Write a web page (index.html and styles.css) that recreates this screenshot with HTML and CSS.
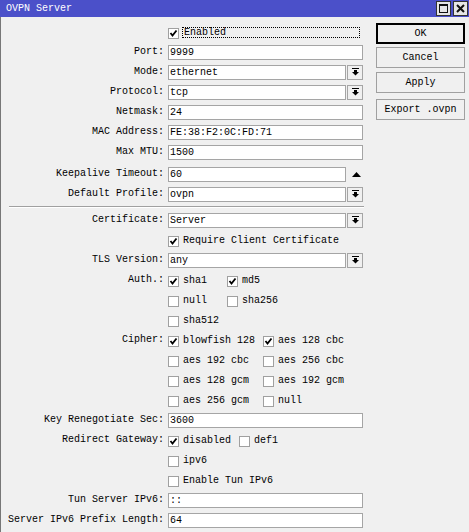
FILE: index.html
```html
<!DOCTYPE html>
<html>
<head>
<meta charset="utf-8">
<title>OVPN Server</title>
<link rel="stylesheet" href="styles.css">
</head>
<body>
<div class="window">
  <div class="titlebar">
    <span class="title">OVPN Server</span>
    <div class="tb-buttons">
      <span class="tb-btn"><svg width="13" height="13" viewBox="0 0 13 13"><rect x="2.5" y="2.5" width="8" height="8" fill="none" stroke="#111" stroke-width="1"/><rect x="2" y="2" width="9" height="2" fill="#111"/></svg></span>
      <span class="tb-btn"><svg width="13" height="13" viewBox="0 0 13 13"><path d="M3 3 L10 10 M10 3 L3 10" stroke="#111" stroke-width="2"/></svg></span>
    </div>
  </div>
  <div class="content">
    <div class="form">
      <div class="row">
        <span class="label"></span>
        <div class="ctrl"><span class="cb"><svg class="tick" width="9" height="9" viewBox="0 0 9 9"><path d="M1.5 4 L3.5 6.5 L7.5 1.5" fill="none" stroke="#000" stroke-width="1.8"/></svg></span><span class="focus">Enabled</span></div>
      </div>
      <div class="row"><span class="label">Port:</span><div class="ctrl"><span class="input">9999</span></div></div>
      <div class="row"><span class="label">Mode:</span><div class="ctrl"><span class="input short">ethernet</span><span class="dd"><svg width="7" height="8" viewBox="0 0 7 8"><rect x="0" y="0" width="7" height="1" fill="#000"/><rect x="2" y="2" width="3" height="2" fill="#000"/><path d="M0 4 L7 4 L3.5 7.5 Z" fill="#000"/></svg></span></div></div>
      <div class="row"><span class="label">Protocol:</span><div class="ctrl"><span class="input short">tcp</span><span class="dd"><svg width="7" height="8" viewBox="0 0 7 8"><rect x="0" y="0" width="7" height="1" fill="#000"/><rect x="2" y="2" width="3" height="2" fill="#000"/><path d="M0 4 L7 4 L3.5 7.5 Z" fill="#000"/></svg></span></div></div>
      <div class="row"><span class="label">Netmask:</span><div class="ctrl"><span class="input">24</span></div></div>
      <div class="row"><span class="label">MAC Address:</span><div class="ctrl"><span class="input">FE:38:F2:0C:FD:71</span></div></div>
      <div class="row"><span class="label">Max MTU:</span><div class="ctrl"><span class="input">1500</span></div></div>
      <div class="row gap-top"><span class="label">Keepalive Timeout:</span><div class="ctrl"><span class="input short">60</span><span class="up"><svg width="9" height="5" viewBox="0 0 9 5"><path d="M0 5 L9 5 L4.5 0 Z" fill="#000"/></svg></span></div></div>
      <div class="row"><span class="label">Default Profile:</span><div class="ctrl"><span class="input short">ovpn</span><span class="dd"><svg width="7" height="8" viewBox="0 0 7 8"><rect x="0" y="0" width="7" height="1" fill="#000"/><rect x="2" y="2" width="3" height="2" fill="#000"/><path d="M0 4 L7 4 L3.5 7.5 Z" fill="#000"/></svg></span></div></div>
      <div class="sep"></div>
      <div class="row"><span class="label">Certificate:</span><div class="ctrl"><span class="input short">Server</span><span class="dd"><svg width="7" height="8" viewBox="0 0 7 8"><rect x="0" y="0" width="7" height="1" fill="#000"/><rect x="2" y="2" width="3" height="2" fill="#000"/><path d="M0 4 L7 4 L3.5 7.5 Z" fill="#000"/></svg></span></div></div>
      <div class="row"><span class="label"></span><div class="ctrl"><span class="cb"><svg class="tick" width="9" height="9" viewBox="0 0 9 9"><path d="M1.5 4 L3.5 6.5 L7.5 1.5" fill="none" stroke="#000" stroke-width="1.8"/></svg></span><span class="cbl">Require Client Certificate</span></div></div>
      <div class="row"><span class="label">TLS Version:</span><div class="ctrl"><span class="input short">any</span><span class="dd"><svg width="7" height="8" viewBox="0 0 7 8"><rect x="0" y="0" width="7" height="1" fill="#000"/><rect x="2" y="2" width="3" height="2" fill="#000"/><path d="M0 4 L7 4 L3.5 7.5 Z" fill="#000"/></svg></span></div></div>
      <div class="row"><span class="label">Auth.:</span>
        <div class="grid">
          <div class="item"><span class="cb"><svg class="tick" width="9" height="9" viewBox="0 0 9 9"><path d="M1.5 4 L3.5 6.5 L7.5 1.5" fill="none" stroke="#000" stroke-width="1.8"/></svg></span><span class="cbl">sha1</span></div>
          <div class="item"><span class="cb"><svg class="tick" width="9" height="9" viewBox="0 0 9 9"><path d="M1.5 4 L3.5 6.5 L7.5 1.5" fill="none" stroke="#000" stroke-width="1.8"/></svg></span><span class="cbl">md5</span></div>
          <div class="item"><span class="cb"></span><span class="cbl">null</span></div>
          <div class="item"><span class="cb"></span><span class="cbl">sha256</span></div>
          <div class="item"><span class="cb"></span><span class="cbl">sha512</span></div>
        </div>
      </div>
      <div class="row"><span class="label">Cipher:</span>
        <div class="grid">
          <div class="item"><span class="cb"><svg class="tick" width="9" height="9" viewBox="0 0 9 9"><path d="M1.5 4 L3.5 6.5 L7.5 1.5" fill="none" stroke="#000" stroke-width="1.8"/></svg></span><span class="cbl">blowfish 128</span></div>
          <div class="item"><span class="cb"><svg class="tick" width="9" height="9" viewBox="0 0 9 9"><path d="M1.5 4 L3.5 6.5 L7.5 1.5" fill="none" stroke="#000" stroke-width="1.8"/></svg></span><span class="cbl">aes 128 cbc</span></div>
          <div class="item"><span class="cb"></span><span class="cbl">aes 192 cbc</span></div>
          <div class="item"><span class="cb"></span><span class="cbl">aes 256 cbc</span></div>
          <div class="item"><span class="cb"></span><span class="cbl">aes 128 gcm</span></div>
          <div class="item"><span class="cb"></span><span class="cbl">aes 192 gcm</span></div>
          <div class="item"><span class="cb"></span><span class="cbl">aes 256 gcm</span></div>
          <div class="item"><span class="cb"></span><span class="cbl">null</span></div>
        </div>
      </div>
      <div class="row"><span class="label">Key Renegotiate Sec:</span><div class="ctrl"><span class="input">3600</span></div></div>
      <div class="row"><span class="label">Redirect Gateway:</span>
        <div class="grid">
          <div class="item"><span class="cb"><svg class="tick" width="9" height="9" viewBox="0 0 9 9"><path d="M1.5 4 L3.5 6.5 L7.5 1.5" fill="none" stroke="#000" stroke-width="1.8"/></svg></span><span class="cbl">disabled</span></div>
          <div class="item"><span class="cb"></span><span class="cbl">def1</span></div>
          <div class="item"><span class="cb"></span><span class="cbl">ipv6</span></div>
        </div>
      </div>
      <div class="row"><span class="label"></span><div class="ctrl"><span class="cb"></span><span class="cbl">Enable Tun IPv6</span></div></div>
      <div class="row"><span class="label">Tun Server IPv6:</span><div class="ctrl"><span class="input">::</span></div></div>
      <div class="row"><span class="label">Server IPv6 Prefix Length:</span><div class="ctrl"><span class="input">64</span></div></div>
    </div>
    <div class="actions">
      <button class="btn default">OK</button>
      <button class="btn">Cancel</button>
      <button class="btn">Apply</button>
      <button class="btn export">Export .ovpn</button>
    </div>
  </div>
</div>
</body>
</html>
```
FILE: styles.css
```css
* { box-sizing: border-box; }
html, body { margin: 0; padding: 0; }
body {
  background: #f0f0f0;
  font-family: "Liberation Mono", "DejaVu Sans Mono", monospace;
  font-size: 10px;
  color: #000;
}
.window { width: 469px; height: 532px; overflow: hidden; background: #f0f0f0; }
.titlebar {
  height: 17px;
  background: #4b50c9;
  color: #fff;
  display: flex;
  align-items: center;
  justify-content: space-between;
  padding-left: 6px;
}
.title { line-height: 17px; }
.tb-buttons { display: flex; gap: 2px; margin-right: 1px; margin-top: -1px; }
.tb-btn {
  width: 15px; height: 15px;
  border: 1px solid #333;
  background: #e6e6e6;
  display: flex; align-items: center; justify-content: center;
}
.content {
  display: flex;
  border-left: 1px solid #777;
  height: 515px;
}
.form { width: 362px; padding-left: 7px; padding-top: 5px; }
.row { display: flex; align-items: flex-start; min-height: 20px; }
.gap-top { margin-top: 2px; }
.label {
  flex: none;
  width: 156px;
  text-align: right;
  line-height: 20px;
  height: 20px;
  white-space: nowrap;
}
.ctrl {
  margin-left: 4px;
  display: flex;
  align-items: center;
  height: 20px;
}
.input {
  display: block;
  width: 195px;
  height: 15px;
  border: 1px solid #a5a5a5;
  background: #fff;
  padding-left: 1px;
  line-height: 13px;
  white-space: nowrap;
}
.input.short { width: 178px; }
.dd {
  width: 16px; height: 15px;
  margin-left: 1px;
  border: 1px solid #a5a5a5;
  background: #f0f0f0;
  display: flex; align-items: center; justify-content: center;
}
.up { margin-left: 6px; display: flex; align-items: center; }
.cb {
  flex: none;
  width: 11px; height: 11px;
  margin-top: 2px;
  border: 1px solid #a0a0a0;
  background: #fff;
  display: flex; align-items: center; justify-content: center;
}
.cbl { margin-left: 4px; white-space: nowrap; }
.focus {
  margin-left: 3px;
  width: 178px;
  height: 11px;
  line-height: 9px;
  padding-left: 1px;
  border: 1px dotted #000;
  margin-top: 1px;
}
.sep {
  width: 355px;
  margin: 2px 0 2px 1px;
  border-top: 1px solid #a0a0a0;
  border-bottom: 1px solid #fff;
}
.grid {
  margin-left: 4px;
  display: grid;
  grid-template-columns: auto auto;
  column-gap: 8px;
  grid-auto-rows: 20px;
  justify-content: start;
}
.item { display: flex; align-items: center; }
.actions {
  margin-left: 13px;
  padding-top: 6px;
  display: flex;
  flex-direction: column;
  width: 89px;
}
.btn {
  width: 89px;
  height: 21px;
  border: 1px solid #a0a0a0;
  background: #f0f0f0;
  font-family: inherit;
  font-size: 10px;
  color: #000;
  padding: 0;
  margin: 0 0 4px 0;
}
.btn.default { border: 2px solid #000; margin-bottom: 3px; }
.btn:nth-child(3) { margin-bottom: 6px; }
```
